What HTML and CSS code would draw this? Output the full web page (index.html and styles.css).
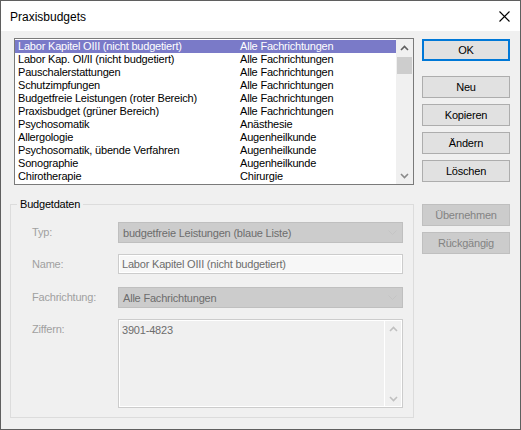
FILE: index.html
```html
<!DOCTYPE html>
<html>
<head>
<meta charset="utf-8">
<link rel="stylesheet" href="styles.css">
</head>
<body>
<div class="window">
  <div class="titlebar">
    <span class="title">Praxisbudgets</span>
    <svg class="close" width="11" height="11" viewBox="0 0 11 11"><path d="M0.5 0.5 L10.5 10.5 M10.5 0.5 L0.5 10.5" stroke="#000" stroke-width="1.1" fill="none"/></svg>
  </div>
  <div class="body">
    <div class="main">
      <div class="listbox">
        <div class="rows">
          <div class="row sel"><span class="c1">Labor Kapitel OIII (nicht budgetiert)</span><span class="c2">Alle Fachrichtungen</span></div>
          <div class="row"><span class="c1">Labor Kap. OI/II (nicht budgetiert)</span><span class="c2">Alle Fachrichtungen</span></div>
          <div class="row"><span class="c1">Pauschalerstattungen</span><span class="c2">Alle Fachrichtungen</span></div>
          <div class="row"><span class="c1">Schutzimpfungen</span><span class="c2">Alle Fachrichtungen</span></div>
          <div class="row"><span class="c1">Budgetfreie Leistungen (roter Bereich)</span><span class="c2">Alle Fachrichtungen</span></div>
          <div class="row"><span class="c1">Praxisbudget (grüner Bereich)</span><span class="c2">Alle Fachrichtungen</span></div>
          <div class="row"><span class="c1">Psychosomatik</span><span class="c2">Anästhesie</span></div>
          <div class="row"><span class="c1">Allergologie</span><span class="c2">Augenheilkunde</span></div>
          <div class="row"><span class="c1">Psychosomatik, übende Verfahren</span><span class="c2">Augenheilkunde</span></div>
          <div class="row"><span class="c1">Sonographie</span><span class="c2">Augenheilkunde</span></div>
          <div class="row"><span class="c1">Chirotherapie</span><span class="c2">Chirurgie</span></div>
        </div>
        <div class="vscroll">
          <div class="arrow"><svg width="9" height="6" viewBox="0 0 9 6"><path d="M1 5 L4.5 1.5 L8 5" stroke="#606060" stroke-width="1.6" fill="none"/></svg></div>
          <div class="thumb"></div>
          <div class="track"></div>
          <div class="arrow"><svg width="9" height="6" viewBox="0 0 9 6"><path d="M1 1 L4.5 4.5 L8 1" stroke="#8a8a8a" stroke-width="1.6" fill="none"/></svg></div>
        </div>
      </div>
      <fieldset class="group">
        <legend>Budgetdaten</legend>
        <div class="field f-typ">
          <span class="lbl">Typ:</span>
          <div class="combo"><span>budgetfreie Leistungen (blaue Liste)</span><svg width="9" height="5" viewBox="0 0 9 5"><path d="M0.5 0.5 L4.5 4.5 L8.5 0.5" stroke="#c4c4c4" stroke-width="1" fill="none"/></svg></div>
        </div>
        <div class="field f-name">
          <span class="lbl">Name:</span>
          <div class="edit">Labor Kapitel OIII (nicht budgetiert)</div>
        </div>
        <div class="field f-fach">
          <span class="lbl">Fachrichtung:</span>
          <div class="combo"><span>Alle Fachrichtungen</span><svg width="9" height="5" viewBox="0 0 9 5"><path d="M0.5 0.5 L4.5 4.5 L8.5 0.5" stroke="#c4c4c4" stroke-width="1" fill="none"/></svg></div>
        </div>
        <div class="field f-ziff">
          <span class="lbl">Ziffern:</span>
          <div class="memo">
            <div class="memo-text">3901-4823</div>
            <div class="memo-scroll">
              <svg width="9" height="6" viewBox="0 0 9 6"><path d="M1 5 L4.5 1.5 L8 5" stroke="#c0c0c0" stroke-width="1.6" fill="none"/></svg>
              <svg width="9" height="6" viewBox="0 0 9 6"><path d="M1 1 L4.5 4.5 L8 1" stroke="#c0c0c0" stroke-width="1.6" fill="none"/></svg>
            </div>
          </div>
        </div>
      </fieldset>
    </div>
    <div class="buttons">
      <div class="btn default">OK</div>
      <div class="btn b-neu">Neu</div>
      <div class="btn">Kopieren</div>
      <div class="btn">Ändern</div>
      <div class="btn">Löschen</div>
      <div class="btn disabled b-ueb">Übernehmen</div>
      <div class="btn disabled">Rückgängig</div>
    </div>
  </div>
</div>
</body>
</html>
```
FILE: styles.css
```css
* { box-sizing: border-box; }
html, body { margin: 0; padding: 0; }
body {
  font-family: "Liberation Sans", Arial, sans-serif;
  font-size: 11px;
  letter-spacing: -0.2px;
  color: #000;
  background: #f0f0f0;
}
.window {
  width: 521px;
  height: 430px;
  border: 1px solid #5f5f5f;
  background: #f0f0f0;
  display: flex;
  flex-direction: column;
}
.titlebar {
  height: 30px;
  background: #fff;
  display: flex;
  align-items: center;
  padding-left: 9px;
  padding-right: 10px;
  flex: none;
}
.title {
  font-size: 12px;
  letter-spacing: 0;
  flex: 1;
  padding-top: 1px;
}
.close { display: block; margin-top: 1px; }
.body {
  flex: 1;
  display: flex;
  padding-left: 9px;
}
.main {
  width: 404px;
  display: flex;
  flex-direction: column;
}
.listbox {
  margin-top: 7px;
  margin-left: 4px;
  width: 400px;
  height: 147px;
  border: 1px solid #7a7a7a;
  background: #fff;
  display: flex;
}
.rows {
  flex: 1;
  padding-top: 1px;
}
.row {
  height: 13px;
  line-height: 13px;
  display: flex;
  padding-left: 3px;
  white-space: nowrap;
}
.row.sel { background: #7a7ac8; color: #fff; }
.c1 { width: 222px; }
.vscroll {
  width: 17px;
  display: flex;
  flex-direction: column;
  background: #f0f0f0;
}
.arrow {
  height: 17px;
  display: flex;
  align-items: center;
  justify-content: center;
  background: #f0f0f0;
}
.arrow svg { display: block; }
.thumb {
  height: 17px;
  margin: 1px 1px 0 1px;
  background: #cdcdcd;
}
.track { flex: 1; }
.group {
  margin: 13px 0 0 0;
  padding: 0 0 0 21px;
  width: 404px;
  height: 220px;
  border: 1px solid #dcdcdc;
  min-width: 0;
}
.group legend {
  margin-left: -15px;
  padding: 0 3px;
  line-height: 13px;
}
.field {
  display: flex;
  align-items: flex-start;
}
.lbl {
  width: 86px;
  color: #a0a0a0;
  flex: none;
}
.f-typ { margin-top: 11px; }
.f-name { margin-top: 11px; }
.f-fach { margin-top: 13px; }
.f-ziff { margin-top: 11px; }
.f-typ .lbl, .f-fach .lbl { line-height: 21px; }
.f-name .lbl { line-height: 20px; }
.f-ziff .lbl { line-height: 13px; padding-top: 4px; }
.combo {
  width: 285px;
  height: 21px;
  background: #cccccc;
  border: 1px solid #bfbfbf;
  color: #6d6d6d;
  display: flex;
  align-items: center;
  justify-content: space-between;
  padding: 0 5px 0 4px;
}
.combo svg { display: block; }
.edit {
  width: 285px;
  height: 20px;
  border: 1px solid #cccccc;
  box-shadow: inset 0 0 0 1px #fff;
  background: #f7f7f7;
  color: #6d6d6d;
  line-height: 18px;
  padding-left: 3px;
}
.memo {
  width: 285px;
  height: 89px;
  border: 1px solid #cccccc;
  box-shadow: inset 0 0 0 1px #fff;
  background: #f0f0f0;
  display: flex;
}
.memo-text {
  flex: 1;
  color: #6d6d6d;
  padding: 4px 0 0 3px;
  line-height: 13px;
}
.memo-scroll {
  width: 18px;
  border-left: 1px solid #fff;
  display: flex;
  flex-direction: column;
  justify-content: space-between;
  align-items: center;
  padding: 6px 0 5px 0;
}
.memo-scroll svg { display: block; }
.buttons {
  margin-left: 8px;
  width: 88px;
  display: flex;
  flex-direction: column;
  gap: 6px;
  padding-top: 8px;
}
.btn {
  height: 22px;
  background: #e1e1e1;
  border: 1px solid #adadad;
  display: flex;
  align-items: center;
  justify-content: center;
}
.btn.default { border: 2px solid #0078d7; }
.b-neu { margin-top: 9px; }
.b-ueb { margin-top: 16px; }
.btn.disabled {
  background: #cccccc;
  border-color: #bfbfbf;
  color: #838383;
}
```
